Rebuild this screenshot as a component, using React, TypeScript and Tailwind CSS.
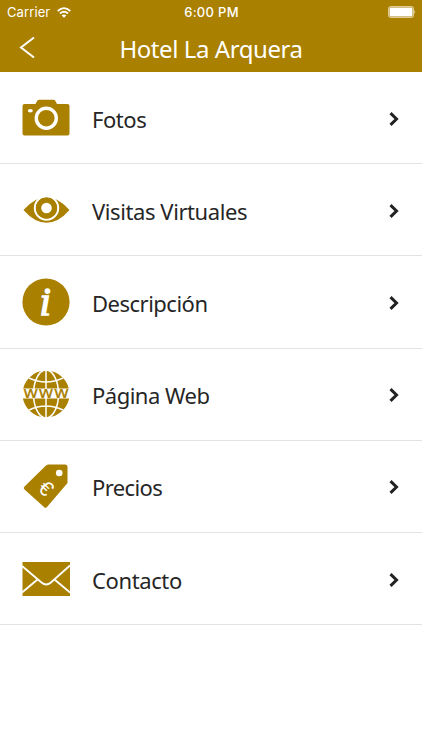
import React from 'react';

interface MenuItem {
  label: string;
  icon: React.ReactNode;
  spacing: string;
}

const iconClass = 'w-12 h-12 shrink-0 text-[#aa8000]';

const CameraIcon = () => (
  <svg viewBox="0 0 48 48" className={iconClass} fill="currentColor">
    <path d="M3 10h10.5l1.6-3q.7-1.200 2-1.200h14.300q1.300 0 2 1.200l1.600 3H45.500a2 2 0 0 1 2 2v27.500a2 2 0 0 1-2 2H2.500a2 2 0 0 1-2-2V12a2 2 0 0 1 2-2z" />
    <circle cx="24.300" cy="24.200" r="10" fill="none" stroke="#fff" strokeWidth="3.400" />
    <ellipse cx="8.300" cy="16.700" rx="2.500" ry="1.800" fill="#fff" />
  </svg>
);

const EyeIcon = () => (
  <svg viewBox="0 0 48 48" className={iconClass} fill="currentColor">
    <path d="M1.500 24Q12.500 11.300 24.500 11.300T47.500 24Q36.500 36.700 24.500 36.700T1.500 24z" />
    <circle cx="24.500" cy="22" r="11.700" fill="none" stroke="#fff" strokeWidth="2" />
    <circle cx="24.500" cy="22" r="7.900" fill="#fff" stroke="currentColor" strokeWidth="5.200" />
  </svg>
);

const InfoIcon = () => (
  <svg viewBox="0 0 48 48" className={iconClass} fill="currentColor">
    <circle cx="24" cy="24" r="23.600" />
    <text x="17.500" y="37" fill="#fff" stroke="#fff" strokeWidth="1.400" fontSize="41" fontStyle="italic" fontFamily="Liberation Serif, serif">i</text>
  </svg>
);

const GlobeIcon = () => (
  <svg viewBox="0 0 48 48" className={iconClass} fill="currentColor">
    <circle cx="24" cy="24" r="23.500" />
    <g fill="none" stroke="#fff" strokeWidth="1.500">
      <path d="M24 0v48M7 8Q24 16 41 8M7 40Q24 32 41 40" />
      <ellipse cx="24" cy="24" rx="12.500" ry="24" />
    </g>
    <path d="M0 18.500h48v10H0z" fill="#fff" />
    <text x="1" y="28" textLength="46" lengthAdjust="spacingAndGlyphs" fontSize="16.500" stroke="currentColor" strokeWidth=".2" fontFamily="DejaVu Sans, sans-serif">www</text>
  </svg>
);

const PriceIcon = () => (
  <svg viewBox="0 0 48 48" className={iconClass} fill="currentColor">
    <path d="M27 2.500h16a2.500 2.500 0 0 1 2.500 2.500v16L25 45a2 2 0 0 1-3 0L2.500 27.500a2 2 0 0 1 0-3L24 3.500q1.200-1 3-1z" />
    <circle cx="37.200" cy="11" r="3.300" fill="#fff" />
    <text transform="translate(24 26.5) rotate(45)" y="7" textAnchor="middle" fill="#fff" fontSize="21" fontFamily="Liberation Sans, sans-serif">€</text>
  </svg>
);

const MailIcon = () => (
  <svg viewBox="0 0 48 48" className={iconClass} fill="currentColor">
    <path d="M.5 7h47.500v34H.5z" />
    <path d="M0 11l19.500 16.500q4.700 4 9.400 0L48 10.500M0 37.500l15.500-13M48 37.500L32.500 24.500" fill="none" stroke="#fff" strokeWidth="1.800" />
  </svg>
);

const items: MenuItem[] = [
  { label: 'Fotos', icon: <CameraIcon />, spacing: 'tracking-[-0.45px]' },
  { label: 'Visitas Virtuales', icon: <EyeIcon />, spacing: 'tracking-[-0.41px]' },
  { label: 'Descripción', icon: <InfoIcon />, spacing: 'tracking-[-0.5px]' },
  { label: 'Página Web', icon: <GlobeIcon />, spacing: 'tracking-[-0.5px]' },
  { label: 'Precios', icon: <PriceIcon />, spacing: 'tracking-[-0.6px]' },
  { label: 'Contacto', icon: <MailIcon />, spacing: 'tracking-[-0.38px]' },
];

export default function App() {
  return (
    <div className="w-full h-screen bg-white overflow-hidden font-['Noto_Sans',sans-serif]">
      <header className="h-[72px] bg-[#aa8000] text-white">
        {/* Status bar */}
        <div className="h-6 grid grid-cols-3 items-center pl-[7px] pr-[6px] font-['Inter',sans-serif] text-[13px] leading-6">
          <div className="flex items-center gap-[7px]">
            <span className="tracking-[0.1px]">Carrier</span>
            <svg viewBox="0 0 14 11" className="w-3.5 h-[11px]" fill="none" stroke="currentColor" strokeWidth="1.800">
              <path d="M.7 4Q7-1.800 13.300 4M3 6.500Q7 3 11 6.500" />
              <path d="M7 10.700L4.700 8.400Q7 6.500 9.300 8.400z" fill="currentColor" stroke="none" />
            </svg>
          </div>
          <span className="text-center font-medium tracking-[0.3px]">6:00 PM</span>
          <svg viewBox="0 0 28 12" className="w-7 h-3 justify-self-end">
            <rect x=".5" y=".5" width="25" height="11" rx="2" fill="none" stroke="#fff" strokeOpacity=".6" />
            <rect x="1.500" y="1.500" width="23" height="9" rx="1" fill="#fff" />
            <path d="M26.500 4q1.500 2 0 4z" fill="#fff" />
          </svg>
        </div>

        {/* Title bar */}
        <div className="h-12 grid grid-cols-[60px_1fr_60px] items-center">
          <svg viewBox="0 0 16 24" className="w-4 h-6 ml-[19px] mb-[3px]" fill="none" stroke="currentColor" strokeWidth="2">
            <path d="M15 2.500L2 12.500L15 22.500" />
          </svg>
          <h1 className="pt-px text-center text-2xl tracking-[-0.43px] whitespace-nowrap">Hotel La Arquera</h1>
        </div>
      </header>

      {/* Menu */}
      <ul>
        {items.map((item) => (
          <li key={item.label} className="h-[92.200px] flex items-center pl-[22px] pr-[23px] border-b border-[#e2e2e2]">
            {item.icon}
            <span className={`ml-[22px] pt-[3px] flex-1 text-[22px] text-[#262626] ${item.spacing}`}>{item.label}</span>
            <svg viewBox="0 0 10 14" className="w-2.5 h-3.5 mt-0.5" fill="none" stroke="#222" strokeWidth="3">
              <path d="M1.500 1.200L7.500 7L1.500 12.800" />
            </svg>
          </li>
        ))}
      </ul>
    </div>
  );
}
